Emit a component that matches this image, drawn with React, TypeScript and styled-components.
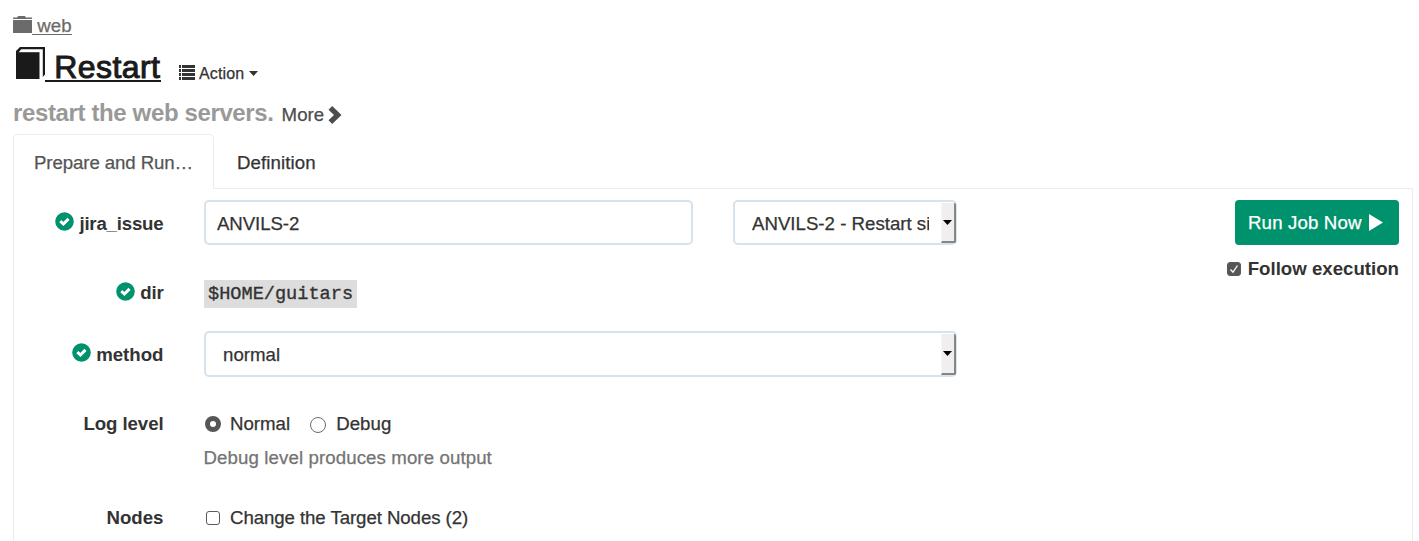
import React from "react";
import styled, { createGlobalStyle } from "styled-components";

const GlobalStyle = createGlobalStyle`
  * { box-sizing: border-box; }
  body {
    margin: 0;
    background: #fff;
    color: #333;
    font: 18.67px/28px "Liberation Sans", Arial, sans-serif;
    -webkit-text-stroke: 0.25px;
    overflow: hidden;
  }
`;

const Page = styled.main`
  height: 541px;
  padding: 0 6px 0 13px;
  overflow: hidden;
  display: flex;
  flex-direction: column;
`;

const Text = styled.span<{ $ls?: number }>`
  letter-spacing: ${(p) => p.$ls ?? 0}px;
  white-space: pre;
`;

const GroupLink = styled.a`
  display: flex;
  height: 39px;
  padding-top: 11px;
  color: #6b6b6b;
  svg { display: block; margin-top: 5px; }
`;

const Linked = styled.span<{ $w: number; $h: number; $line: number; $ls?: number; $drop: number }>`
  width: ${(p) => p.$w}px;
  height: ${(p) => p.$h}px;
  line-height: ${(p) => p.$h + p.$drop}px;
  border-bottom: ${(p) => p.$line}px solid currentColor;
  letter-spacing: ${(p) => p.$ls ?? 0}px;
  white-space: pre;
`;

const TitleRow = styled.div`
  display: flex;
  height: 56px;
  padding-top: 7px;
`;

const JobLink = styled.a`
  display: flex;
  color: #1a1a1a;
  font-size: 32px;
  -webkit-text-stroke: 1px #1a1a1a;
  svg { display: block; margin: 1px 0 0 2px; -webkit-text-stroke: 0; }
`;

const ActionMenu = styled.button`
  display: flex;
  align-items: center;
  gap: 5px;
  height: 26px;
  margin: 14px 0 0 17px;
  padding: 0;
  border: 0;
  background: none;
  color: #333;
  font: 16px/24px "Liberation Sans", Arial, sans-serif;
  svg { display: block; }
  svg:first-child { margin-right: -1px; margin-top: -1px; }
  span { padding-top: 2px; }
`;

const Description = styled.div`
  display: flex;
  height: 39px;
  padding-top: 4px;
  color: #999;
  font-size: 24px;
  font-weight: 700;
  -webkit-text-stroke: 0;
`;

const More = styled.a`
  display: flex;
  align-items: center;
  height: 28px;
  margin: 2px 0 0 8px;
  color: #4d4d4d;
  font-size: 18.67px;
  font-weight: 400;
  -webkit-text-stroke: 0.25px;
  svg { display: block; margin: -1px 0 0 4px; }
`;

const Tabs = styled.nav`
  display: flex;
  height: 55px;
  flex: none;
`;

const Tab = styled.div<{ $active?: boolean }>`
  width: ${(p) => (p.$active ? "201px" : "auto")};
  flex: ${(p) => (p.$active ? "none" : "1")};
  padding: ${(p) => (p.$active ? "14px 0 0 20px" : "15px 0 0 23px")};
  border: 1px solid #ececec;
  border-width: ${(p) => (p.$active ? "1px 1px 0 1px" : "0 0 1px 0")};
  border-radius: ${(p) => (p.$active ? "5px 5px 0 0" : "0")};
  color: ${(p) => (p.$active ? "#555" : "#333")};
`;

const Panel = styled.section`
  display: flex;
  justify-content: space-between;
  flex: 1;
  padding: 11px 13px 0 0;
  border: solid #ececec;
  border-width: 0 1px;
`;

const Form = styled.form`
  display: flex;
  flex-direction: column;
  width: 945px;
`;

const Row = styled.div<{ $h: number; $gap: number }>`
  display: grid;
  grid-template-columns: 149.5px 753px;
  column-gap: 40.5px;
  align-items: center;
  height: ${(p) => p.$h}px;
  margin-bottom: ${(p) => p.$gap}px;
`;

const Label = styled.label<{ $top?: number; $bottom?: number }>`
  display: flex;
  justify-content: flex-end;
  align-items: center;
  gap: 5px;
  height: 28px;
  padding-top: ${(p) => p.$top ?? 0}px;
  padding-bottom: ${(p) => p.$bottom ?? 0}px;
  font-weight: 700;
  -webkit-text-stroke: 0;
  svg { display: block; margin-top: -4px; }
`;

const Controls = styled.div`
  display: flex;
  align-items: center;
  justify-content: space-between;
`;

const Input = styled.input`
  width: 489px;
  height: 45px;
  padding: 2px 11px 0;
  border: 2px solid #d6e3ec;
  border-radius: 5px;
  color: #333;
  font: 18.67px "Liberation Sans", Arial, sans-serif;
  -webkit-text-stroke: 0.25px;
  outline: none;
  letter-spacing: -0.1px;
`;

const SelectBox = styled.div<{ $w: number; $h: number }>`
  display: flex;
  width: ${(p) => p.$w}px;
  height: ${(p) => p.$h}px;
  padding-left: 17px;
  border: 2px solid #d6e3ec;
  border-radius: 5px;
  line-height: 43px;
`;

const SelectValue = styled.div`
  flex: 1;
  overflow: hidden;
  margin-right: 11px;
`;

const SelectArrow = styled.div`
  display: flex;
  align-items: center;
  justify-content: center;
  width: 15px;
  margin: 1px -1px 0 1px;
  background: #efefef;
  border: solid #858585;
  border-width: 0 2px 2px 0;
  border-radius: 0 2px 2px 0;
  border-left: 1px solid #f6f6f6;
  svg { margin-right: 1px; }
`;

const Code = styled.code`
  display: block;
  width: 153px;
  height: 28px;
  padding-left: 4px;
  background: #ddd;
  font: 18.6px/29px "Liberation Mono", monospace;
  -webkit-text-stroke: 0.35px;
  white-space: pre;
`;

const Options = styled.div<{ $gap?: number }>`
  display: flex;
  align-items: center;
  gap: ${(p) => p.$gap ?? 0}px;
  padding-left: ${(p) => (p.$gap ? 2 : 1)}px;
`;

const Radio = styled.span<{ $on?: boolean }>`
  width: 16px;
  height: 16px;
  margin: ${(p) => (p.$on ? "0 9px 0 0" : "2px 10px 0 20px")};
  border: ${(p) => (p.$on ? "5px solid #565656" : "1px solid #6b6b6b")};
  border-radius: 50%;
  background: #fff;
`;

const CheckSquare = styled.span<{ $on?: boolean }>`
  display: flex;
  align-items: center;
  justify-content: center;
  width: 14px;
  height: 14px;
  border: 1px solid #5a5a5a;
  border-radius: 3px;
  background: ${(p) => (p.$on ? "#565656" : "#fff")};
`;

const Help = styled.p`
  height: 28px;
  margin: 0 0 32px 189.5px;
  color: #737373;
`;

const Actions = styled.aside`
  display: flex;
  flex-direction: column;
  align-items: flex-end;
`;

const RunButton = styled.button`
  display: flex;
  align-items: center;
  width: 164px;
  height: 45px;
  padding: 0 0 0 13px;
  border: 0;
  border-radius: 4px;
  background: #00926c;
  color: #fff;
  font: 18.67px/28px "Liberation Sans", Arial, sans-serif;
  -webkit-text-stroke: 0.25px;
  svg { display: block; margin-left: 7px; }
`;

const Follow = styled.label`
  display: flex;
  align-items: center;
  gap: 7px;
  height: 28px;
  margin-top: 10px;
  font-weight: 700;
  -webkit-text-stroke: 0;
`;

const CheckCircle = () => (
  <svg width="19" height="19" viewBox="0 0 19 19">
    <circle cx="9.5" cy="9.5" r="9.3" fill="#00926c" />
    <path d="M5.3 9.2 8.4 12 13.5 6.9" fill="none" stroke="#fff" strokeWidth="3" />
  </svg>
);

const Triangle = ({ w = 9, h = 5, fill = "#000" }) => (
  <svg width={w} height={h} viewBox="0 0 8 5" preserveAspectRatio="none">
    <path d="M0 0h8L4 5z" fill={fill} />
  </svg>
);

export default function App() {
  return (
    <>
      <GlobalStyle />
      <Page>
        <GroupLink>
          <svg width="19" height="17" viewBox="0 0 19 17">
            <path d="M0 3V1.4h4L5.2 0h6.6L13 1.4h6V3zM0 4h19v13H0z" fill="#6b6b6b" />
          </svg>
          <Linked $w={40} $h={24} $line={1} $drop={5} $ls={0.1}> web</Linked>
        </GroupLink>

        <TitleRow>
          <JobLink>
            <svg width="30" height="33" viewBox="0 0 30 33">
              <path d="M1 5.2h23.5V32H1z" fill="#1a1a1a" />
              <path d="M1 6.5V4L5 0h25v27.5L27.8 30V2.2H6.2L3.5 5.6z" fill="#1a1a1a" />
            </svg>
            <Linked $w={116} $h={36} $line={2} $drop={7} $ls={0.4}> Restart</Linked>
          </JobLink>
          <ActionMenu>
            <svg width="17" height="15" viewBox="0 0 17 15" fill="#333">
              <path d="M1 0h2v3H1zM1 4h2v3H1zM1 8h2v3H1zM1 12h2v3H1zM4 0h13v3H4zM4 4h13v3H4zM4 8h13v3H4zM4 12h13v3H4z" />
            </svg>
            <Text $ls={0.15}>Action</Text>
            <Triangle h={5} fill="#333" />
          </ActionMenu>
        </TitleRow>

        <Description>
          <Text $ls={-0.37}>restart the web servers.</Text>
          <More>
            <Text>More</Text>
            <svg width="14" height="18" viewBox="0 0 14 18">
              <path d="M.5 3.7 4.2 0l9.3 9-9.3 9L.5 14.3 6 9z" fill="#4d4d4d" />
            </svg>
          </More>
        </Description>

        <Tabs>
          <Tab $active><Text $ls={-0.1}>Prepare and Run…</Text></Tab>
          <Tab><Text $ls={0.1}>Definition</Text></Tab>
        </Tabs>

        <Panel>
          <Form>
            <Row $h={45} $gap={35}>
              <Label $top={2}><CheckCircle /><Text $ls={-0.2}>jira_issue</Text></Label>
              <Controls>
                <Input defaultValue="ANVILS-2" />
                <SelectBox $w={224} $h={45}>
                  <SelectValue><Text>ANVILS-2 - Restart si</Text></SelectValue>
                  <SelectArrow><Triangle /></SelectArrow>
                </SelectBox>
              </Controls>
            </Row>
            <Row $h={28} $gap={23}>
              <Label $bottom={2}><CheckCircle /><Text $ls={-0.2}>dir</Text></Label>
              <Code>$HOME/guitars</Code>
            </Row>
            <Row $h={46} $gap={33}>
              <Label $top={1}><CheckCircle /><Text>method</Text></Label>
              <SelectBox $w={753} $h={46}>
                <SelectValue><Text>normal</Text></SelectValue>
                <SelectArrow><Triangle /></SelectArrow>
              </SelectBox>
            </Row>
            <Row $h={28} $gap={6}>
              <Label><Text $ls={-0.1}>Log level</Text></Label>
              <Options>
                <Radio $on /><Text>Normal</Text>
                <Radio /><Text $ls={0.05}>Debug</Text>
              </Options>
            </Row>
            <Help><Text $ls={0.1}>Debug level produces more output</Text></Help>
            <Row $h={28} $gap={0}>
              <Label><Text>Nodes</Text></Label>
              <Options $gap={10}>
                <CheckSquare /><Text $ls={-0.08}>Change the Target Nodes (2)</Text>
              </Options>
            </Row>
          </Form>

          <Actions>
            <RunButton type="button">
              <Text $ls={0.15}>Run Job Now</Text>
              <svg width="14" height="17" viewBox="0 0 14 16" preserveAspectRatio="none"><path d="M0 0 14 8 0 16z" fill="#fff" /></svg>
            </RunButton>
            <Follow>
              <CheckSquare $on>
                <svg width="10" height="10" viewBox="0 0 10 10">
                  <path d="M1.5 5.5 4 8.2 8.5 1.5" fill="none" stroke="#fff" strokeWidth="1.3" />
                </svg>
              </CheckSquare>
              <Text>Follow execution</Text>
            </Follow>
          </Actions>
        </Panel>
      </Page>
    </>
  );
}
